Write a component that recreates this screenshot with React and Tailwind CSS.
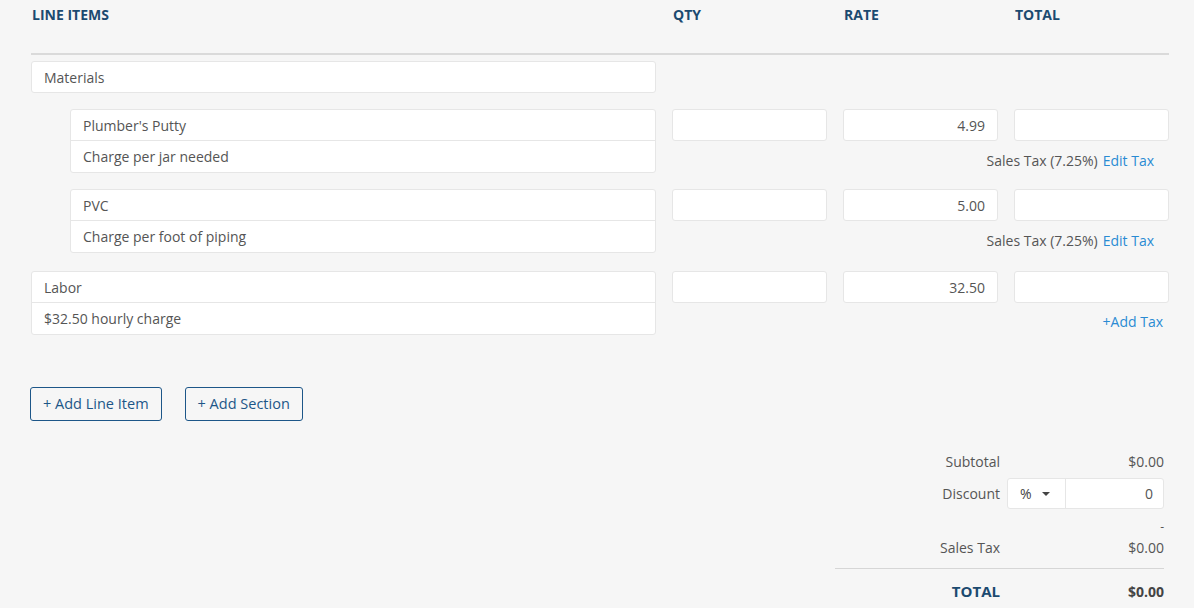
import React from 'react';

const items = [
  { kind: 'section', name: 'Materials' },
  { kind: 'item', indent: true, name: "Plumber's Putty", desc: 'Charge per jar needed', rate: '4.99', tax: 'edit', gap: 'mt-[16px]' },
  { kind: 'item', indent: true, name: 'PVC', desc: 'Charge per foot of piping', rate: '5.00', tax: 'edit', gap: 'mt-[16px]' },
  { kind: 'item', indent: false, name: 'Labor', desc: '$32.50 hourly charge', rate: '32.50', tax: 'add', gap: 'mt-[18px]' },
];

const Box = ({ children, className = '' }) => (
  <div className={`h-[32px] bg-white border border-[#e6e6e6] rounded-[3px] flex items-center px-3 text-[14px] text-[#555] ${className}`}>
    {children}
  </div>
);

const ItemRow = ({ item }) => (
  <div className="flex">
    <div className={`w-[625px] shrink-0 ${item.indent ? 'pl-[39px]' : ''}`}>
      <div className="bg-white border border-[#e6e6e6] rounded-[3px] text-[14px] text-[#555]">
        <div className="h-[31px] flex items-center pl-3 border-b border-[#e6e6e6]">{item.name}</div>
        <div className="h-[31px] flex items-center pl-3">{item.desc}</div>
      </div>
    </div>
    <div className="flex-1 pl-[16px]">
      <div className="grid grid-cols-3 gap-x-[16px]">
        <Box />
        <Box className="justify-end">{item.rate}</Box>
        <Box />
      </div>
      {item.tax === 'edit' ? (
        <div className="h-[32px] flex items-end justify-end pb-[2px] pr-[15px] text-[14px] leading-[20px] text-[#555]">
          Sales Tax (7.25%)
          <span className="ml-[5px] text-[#2a8bd3]">Edit Tax</span>
        </div>
      ) : (
        <div className="h-[32px] flex items-end justify-end pb-[3px] pr-[6px] text-[14px] leading-[20px] text-[#2a8bd3]">+Add Tax</div>
      )}
    </div>
  </div>
);

export default function App() {
  return (
    <div className="min-h-screen bg-[#f6f6f6] pl-[31px] pr-[25px]" style={{ fontFamily: '"Open Sans", "Liberation Sans", sans-serif' }}>
      <div className="grid grid-cols-[625px_1fr_1fr_1fr] gap-x-[16px] pt-[4px] h-[55px] border-b-2 border-[#dadada] text-[14px] font-bold text-[#1c4a70] uppercase">
        <div className="pl-[1px]">Line Items</div>
        <div className="pl-[1px]">Qty</div>
        <div className="pl-[1px]">Rate</div>
        <div className="pl-[1px]">Total</div>
      </div>

      <div className="pt-[6px] flex flex-col">
        {items.map((it, i) =>
          it.kind === 'section' ? (
            <div key={i} className="w-[625px]">
              <Box>{it.name}</Box>
            </div>
          ) : (
            <div key={i} className={it.gap}>
              <ItemRow item={it} />
            </div>
          )
        )}
      </div>

      <div className="flex gap-[23px] mt-[52px] -ml-[1px]">
        <button className="h-[34px] px-[12px] border border-[#1d5688] rounded-[3px] text-[14.5px] font-medium text-[#1d5688] bg-transparent">
          + Add Line Item
        </button>
        <button className="h-[34px] px-[12px] border border-[#1d5688] rounded-[3px] text-[14.5px] font-medium text-[#1d5688] bg-transparent">
          + Add Section
        </button>
      </div>

      <div className="flex justify-end mt-[28px] pr-[5px]">
        <div className="w-[329px] text-[14px] text-[#555]">
          <div className="grid grid-cols-[165px_1fr] gap-x-[7px]">
            <div className="h-[24px] flex items-center justify-end">Subtotal</div>
            <div className="h-[24px] flex items-center justify-end">$0.00</div>
            <div className="h-[31px] mt-[5px] flex items-center justify-end">Discount</div>
            <div className="h-[31px] mt-[5px] flex bg-white border border-[#e6e6e6] rounded-[3px]">
              <div className="w-[58px] flex items-center pl-[12px] gap-[10px] border-r border-[#e6e6e6] text-[#444]">
                %
                <span className="w-0 h-0 border-l-[4px] border-r-[4px] border-t-[4px] border-l-transparent border-r-transparent border-t-[#444]" />
              </div>
              <div className="flex-1 flex items-center justify-end pr-[10px]">0</div>
            </div>
            <div className="col-start-2 h-[26px] flex items-end justify-end text-[12px] leading-[16px]">-</div>
            <div className="h-[24px] flex items-center justify-end">Sales Tax</div>
            <div className="h-[24px] flex items-center justify-end">$0.00</div>
          </div>
          <div className="border-t border-[#d6d6d6] mt-[9px]" />
          <div className="grid grid-cols-[165px_1fr] gap-x-[7px] pt-[10px]">
            <div className="h-[24px] flex items-center justify-end font-bold text-[15px] text-[#1c4a70]">TOTAL</div>
            <div className="h-[24px] flex items-center justify-end font-bold text-[#444]">$0.00</div>
          </div>
        </div>
      </div>
    </div>
  );
}
